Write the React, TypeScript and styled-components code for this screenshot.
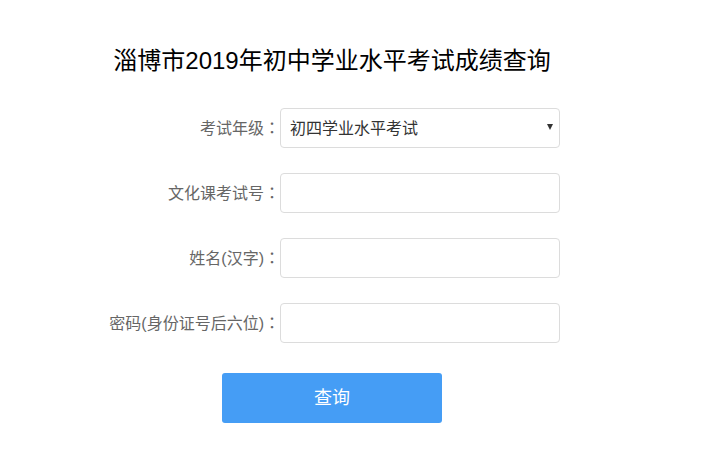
import React from 'react';
import styled, { createGlobalStyle } from 'styled-components';

const GlobalStyle = createGlobalStyle`
  body {
    margin: 0;
    background: #fff;
    font-family: "Microsoft YaHei", Arial, "Noto Sans CJK SC", sans-serif;
  }
`;

type FieldProps = {
  label: string
};

const fields: FieldProps[] = [
  { label: '文化课考试号' },
  { label: '姓名(汉字)' },
  { label: '密码(身份证号后六位)' }
];

const App = () => {
  return (
    <Page>
      <GlobalStyle />
      <Title>淄博市2019年初中学业水平考试成绩查询</Title>
      <Form onSubmit={(e) => e.preventDefault()}>
        <Row>
          <Label>考试年级<Colon>：</Colon></Label>
          <SelectBox>
            <Select defaultValue="4">
              <option value="4">初四学业水平考试</option>
            </Select>
            <Arrow />
          </SelectBox>
        </Row>
        {fields.map((field) => (
          <Row key={field.label}>
            <Label>{field.label}<Colon>：</Colon></Label>
            <Input type="text" />
          </Row>
        ))}
        <Button type="submit">查询</Button>
      </Form>
    </Page>
  );
};

export default App;

const Page = styled.div`
  width: 664px;
  color: #000;
`;

const Title = styled.h1`
  margin: 0;
  padding-top: 46px;
  font-size: 24px;
  line-height: 30px;
  font-weight: normal;
  text-align: center;
  color: #000;
`;

const Form = styled.form`
  margin-top: 32px;
  display: flex;
  flex-direction: column;
  gap: 25px;
`;

const Row = styled.div`
  display: flex;
  align-items: center;
  height: 40px;
`;

const Label = styled.label`
  flex: 0 0 280px;
  text-align: right;
  font-size: 16px;
  line-height: 20px;
  color: #666;
  white-space: nowrap;
`;

const Colon = styled.span`
  font-family: "Noto Sans CJK TC", sans-serif;
`;

const fieldBox = `
  box-sizing: border-box;
  width: 280px;
  height: 40px;
  border: 1px solid #dcdcdc;
  border-radius: 4px;
  background: #fff;
  font-family: inherit;
  font-size: 16px;
  color: #333;
  outline: none;
`;

const SelectBox = styled.div`
  position: relative;
  width: 280px;
  height: 40px;
`;

const Select = styled.select`
  ${fieldBox}
  appearance: none;
  -webkit-appearance: none;
  padding: 0 24px 0 9px;
`;

const Arrow = styled.span`
  position: absolute;
  top: 16px;
  right: 7px;
  width: 0;
  height: 0;
  border-left: 3px solid transparent;
  border-right: 3px solid transparent;
  border-top: 6px solid #333;
  pointer-events: none;
`;

const Input = styled.input`
  ${fieldBox}
  padding: 0 9px;
`;

const Button = styled.button`
  align-self: center;
  margin-top: 5px;
  width: 220px;
  height: 50px;
  border: none;
  border-radius: 3px;
  background: #459df5;
  color: #fff;
  font-family: inherit;
  font-size: 18px;
  line-height: 50px;
  padding: 0;
  cursor: pointer;
`;
